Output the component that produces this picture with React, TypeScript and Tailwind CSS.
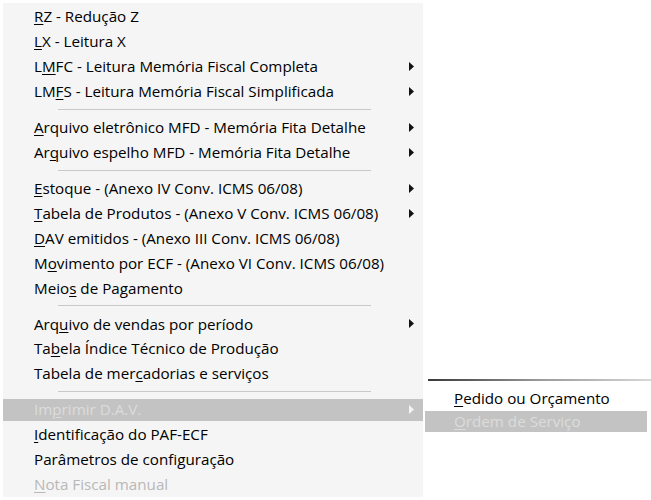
import React from 'react';

type Item =
  | { sep: true }
  | {
      sep?: false;
      pre: string;
      key: string;
      post: string;
      sub?: boolean;
      disabled?: boolean;
      active?: boolean;
    };

const items: Item[] = [
  { pre: '', key: 'R', post: 'Z - Redução Z' },
  { pre: '', key: 'L', post: 'X - Leitura X' },
  { pre: 'L', key: 'M', post: 'FC - Leitura Memória Fiscal Completa', sub: true },
  { pre: 'LM', key: 'F', post: 'S - Leitura Memória Fiscal Simplificada', sub: true },
  { sep: true },
  { pre: '', key: 'A', post: 'rquivo eletrônico MFD - Memória Fita Detalhe', sub: true },
  { pre: 'Ar', key: 'q', post: 'uivo espelho MFD - Memória Fita Detalhe', sub: true },
  { sep: true },
  { pre: '', key: 'E', post: 'stoque - (Anexo IV Conv. ICMS 06/08)', sub: true },
  { pre: '', key: 'T', post: 'abela de Produtos - (Anexo V Conv. ICMS 06/08)', sub: true },
  { pre: '', key: 'D', post: 'AV emitidos - (Anexo III Conv. ICMS 06/08)' },
  { pre: 'M', key: 'o', post: 'vimento por ECF - (Anexo VI Conv. ICMS 06/08)' },
  { pre: 'Meio', key: 's', post: ' de Pagamento' },
  { sep: true },
  { pre: 'Arq', key: 'u', post: 'ivo de vendas por período', sub: true },
  { pre: 'Ta', key: 'b', post: 'ela Índice Técnico de Produção' },
  { pre: 'Tabela de mer', key: 'c', post: 'adorias e serviços' },
  { sep: true },
  { pre: 'Im', key: 'p', post: 'rimir D.A.V.', sub: true, disabled: true, active: true },
  { pre: '', key: 'I', post: 'dentificação do PAF-ECF' },
  { pre: 'Parâmetros de configuração', key: '', post: '' },
  { pre: '', key: 'N', post: 'ota Fiscal manual', disabled: true },
];

const Arrow = ({ color }: { color: string }) => (
  <svg width="5" height="9" viewBox="0 0 5 9" className="shrink-0">
    <path d="M0 0 L5 4.5 L0 9 Z" fill={color} />
  </svg>
);

const Label = ({ pre, k, post }: { pre: string; k: string; post: string }) => (
  <span className="whitespace-nowrap">
    {pre}
    {k && <span className="underline underline-offset-2 decoration-1">{k}</span>}
    {post}
  </span>
);

export default function App() {
  return (
    <div
      className="relative w-[651px] h-[500px] bg-white overflow-hidden text-[15.2px] text-black"
      style={{ fontFamily: '"Open Sans", "Noto Sans", Arial, sans-serif' }}
    >
      <div className="ml-[3px] mt-[3px] w-[420px] h-[494px] bg-[#f5f5f5] pt-px flex flex-col">
        {items.map((it, i) =>
          it.sep ? (
            <div key={i} className="h-[11px] flex items-center pl-[55px] pr-[52px]">
              <div className="w-full h-px bg-[#c9c9c9]" />
            </div>
          ) : (
            <div key={i} className="h-[25px] flex items-center">
              <div
                className={`w-full h-[22px] flex items-center pl-[31px] pr-[9px] ${
                  it.active ? 'bg-[#c3c3c3]' : ''
                } ${it.disabled ? (it.active ? 'text-[#dcdcdc]' : 'text-[#b8b8b8]') : ''}`}
              >
                <div className="flex-1">
                  <Label pre={it.pre} k={it.key} post={it.post} />
                </div>
                {it.sub && <Arrow color={it.active ? '#f4f4f4' : '#111'} />}
              </div>
            </div>
          )
        )}
      </div>

      {/* submenu */}
      <div className="absolute left-[425px] top-[379px] w-[226px] bg-white">
        <div className="h-[2px] ml-[3px] bg-gradient-to-r from-[#3a3a3a] via-[#9a9a9a] to-[#d8d8d8]" />
        <div className="pt-[5px] pb-[7px]">
          <div className="h-[25px] flex items-center pl-[29px]">
            <Label pre="" k="P" post="edido ou Orçamento" />
          </div>
          <div className="h-[21px] mr-[4px] flex items-center pl-[29px] bg-[#c3c3c3] text-[#dcdcdc]">
            <Label pre="" k="O" post="rdem de Serviço" />
          </div>
        </div>
      </div>
    </div>
  );
}
